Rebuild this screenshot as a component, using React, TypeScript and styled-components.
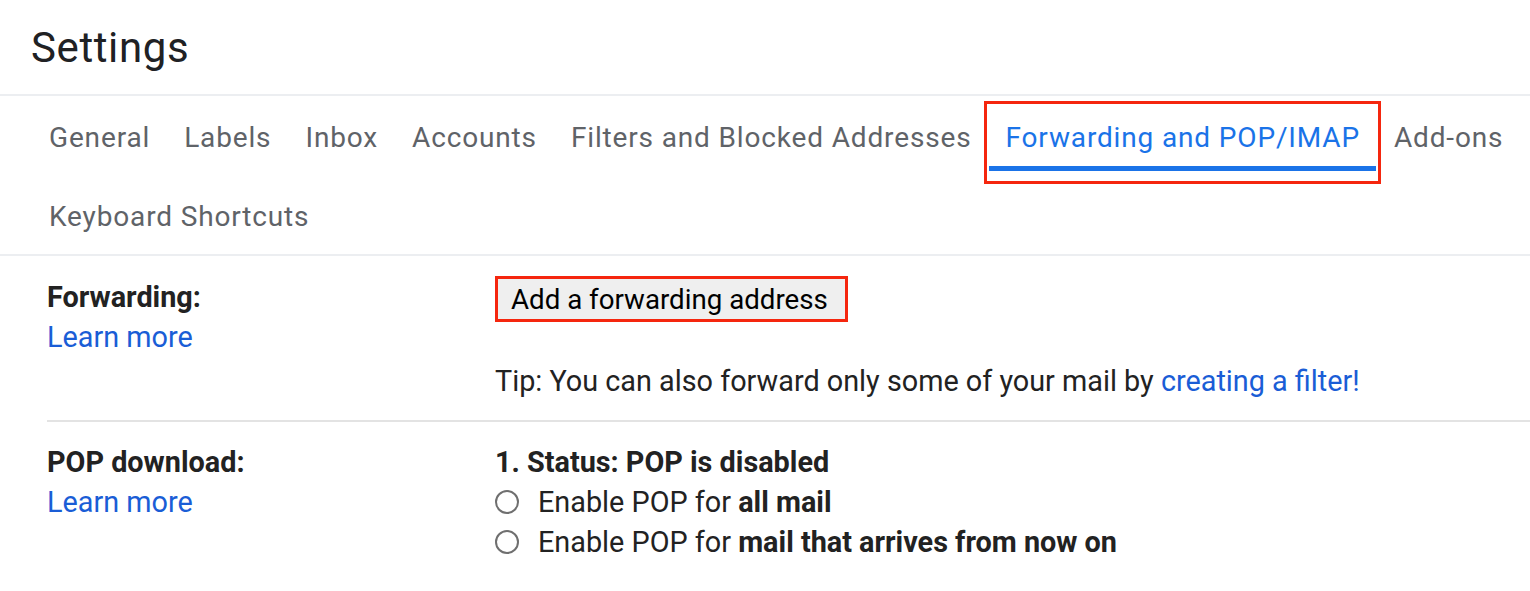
import React from 'react';
import styled, { createGlobalStyle } from 'styled-components';

const GlobalStyle = createGlobalStyle`
    html, body {
        margin: 0;
        padding: 0;
        background: #fff;
    }
    body {
        font-family: Roboto, 'Liberation Sans', Arial, sans-serif;
        color: #222;
    }
`;

const tabs = [
    'General',
    'Labels',
    'Inbox',
    'Accounts',
    'Filters and Blocked Addresses',
    'Forwarding and POP/IMAP',
    'Add-ons',
    'Keyboard Shortcuts',
];

const ACTIVE_TAB = 'Forwarding and POP/IMAP';

const App = () => {
    return (
        <Page>
            <GlobalStyle />
            <Header>
                <Title>Settings</Title>
            </Header>
            <TabBar>
                {tabs.map((tab) => (
                    <Tab key={tab} active={tab === ACTIVE_TAB}>
                        {tab}
                    </Tab>
                ))}
            </TabBar>
            <Section>
                <SectionLabel>
                    <LabelTitle>Forwarding:</LabelTitle>
                    <Link href="#">Learn more</Link>
                </SectionLabel>
                <SectionBody>
                    <Line>
                        <Button type="button">Add a forwarding address</Button>
                    </Line>
                    <TipLine>
                        Tip: You can also forward only some of your mail by{' '}
                        <Link href="#">creating a filter!</Link>
                    </TipLine>
                </SectionBody>
            </Section>
            <Section>
                <SectionLabel>
                    <LabelTitle>POP download:</LabelTitle>
                    <Link href="#">Learn more</Link>
                </SectionLabel>
                <SectionBody>
                    <Line>
                        <b>1. Status: POP is disabled</b>
                    </Line>
                    <RadioLine>
                        <Radio />
                        <span>
                            Enable POP for <b>all mail</b>
                        </span>
                    </RadioLine>
                    <RadioLine>
                        <Radio />
                        <span>
                            Enable POP for <b>mail that arrives from now on</b>
                        </span>
                    </RadioLine>
                </SectionBody>
            </Section>
        </Page>
    );
};

const Page = styled.div`
    width: 1530px;
    min-height: 591px;
    background: #fff;
`;

const Header = styled.div`
    height: 96px;
    padding-left: 31px;
    display: flex;
    align-items: center;
    border-bottom: 2px solid #eceef1;
    box-sizing: border-box;
`;

const Title = styled.h1`
    margin: 0;
    font-family: Roboto, 'Open Sans', sans-serif;
    font-weight: 400;
    font-size: 42px;
    color: #202124;
    letter-spacing: 0.6px;
`;

const TabBar = styled.nav`
    display: flex;
    flex-wrap: wrap;
    padding-left: 32px;
    border-bottom: 2px solid #eceef1;
`;

const Tab = styled.div<{ active?: boolean }>`
    position: relative;
    height: 79px;
    padding: 4px 17px 0;
    display: flex;
    align-items: center;
    box-sizing: border-box;
    font-family: Roboto, 'Open Sans', sans-serif;
    font-size: 28px;
    letter-spacing: 0.85px;
    white-space: nowrap;
    color: ${({ active }) => (active ? '#1a73e8' : '#5f6368')};

    &::before {
        content: '';
        display: ${({ active }) => (active ? 'block' : 'none')};
        position: absolute;
        left: 1px;
        right: 1px;
        bottom: 4px;
        height: 5px;
        background: #1a73e8;
    }

    &::after {
        content: '';
        display: ${({ active }) => (active ? 'block' : 'none')};
        position: absolute;
        top: 5px;
        bottom: -9px;
        left: -4px;
        right: -4px;
        border: 3px solid #f5260e;
    }
`;

const Section = styled.div`
    display: flex;
    margin-left: 47px;
    padding: 21px 0 19px;
    font-size: 28.8px;
    line-height: 40px;

    & + & {
        border-top: 2px solid #e3e3e3;
        padding-top: 20px;
    }
`;

const SectionLabel = styled.div`
    width: 448px;
    flex-shrink: 0;
    display: flex;
    flex-direction: column;
    align-items: flex-start;
`;

const LabelTitle = styled.span`
    font-weight: 700;
    color: #222;
`;

const Link = styled.a`
    color: #1a5dd6;
    text-decoration: none;
`;

const SectionBody = styled.div`
    display: flex;
    flex-direction: column;
    color: #222;

    b {
        font-weight: 700;
    }
`;

const Line = styled.div`
    display: flex;
    align-items: center;
    height: 40px;
    white-space: nowrap;
`;

const TipLine = styled.div`
    margin-top: 44px;
    white-space: nowrap;
`;

const Button = styled.button`
    height: 46px;
    margin-top: 4px;
    padding: 0 17px 0 13px;
    border: 3px solid #f5260e;
    background: #efefef;
    font-family: Roboto, 'Liberation Sans', sans-serif;
    font-size: 27.7px;
    color: #000;
    cursor: pointer;
`;

const RadioLine = styled.label`
    display: flex;
    align-items: center;
    height: 40px;
    gap: 19px;
    white-space: nowrap;
`;

const Radio = styled.span`
    width: 24px;
    height: 24px;
    border: 2px solid #6f6f6f;
    border-radius: 50%;
    box-sizing: border-box;
    flex-shrink: 0;
`;

export default App;
